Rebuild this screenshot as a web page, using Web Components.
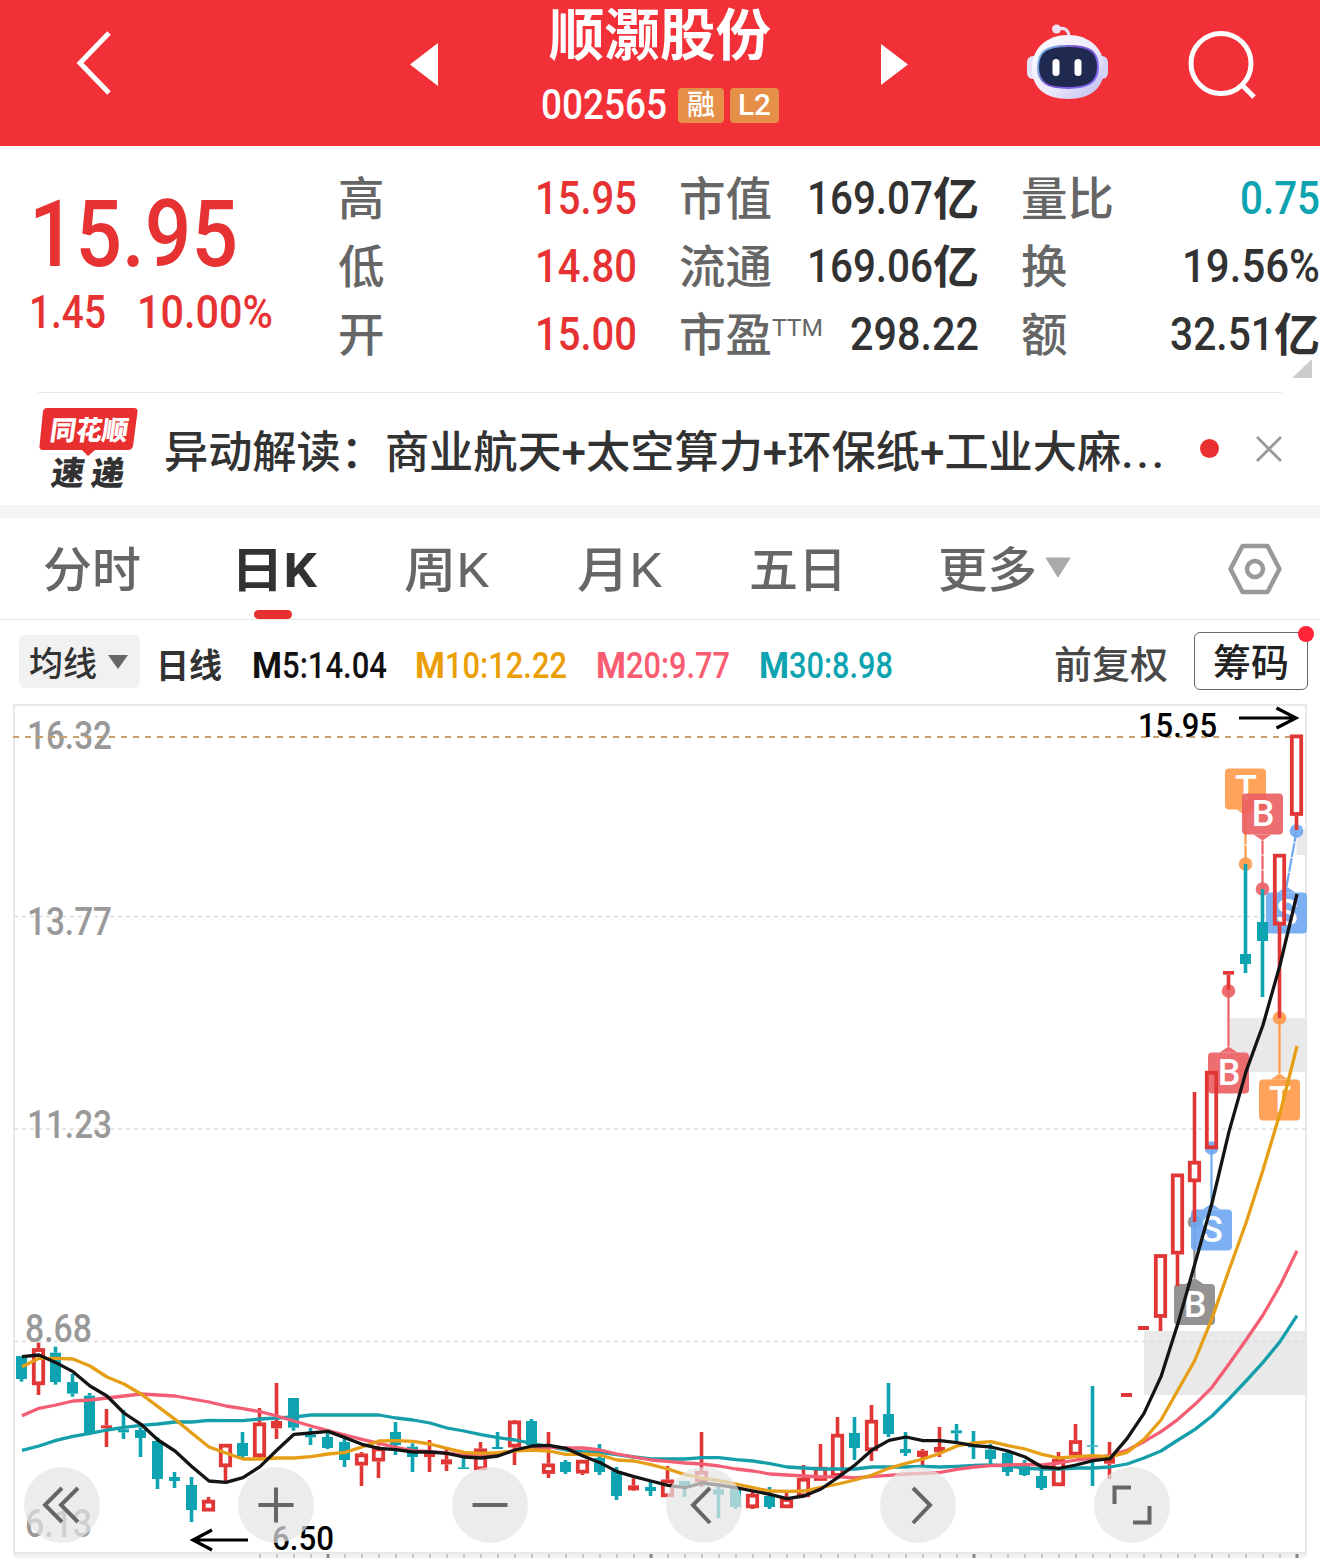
<!DOCTYPE html>
<html lang="zh-CN">
<head>
<meta charset="utf-8">
<title>顺灏股份 002565</title>
<style>
  body {
    margin: 0;
    width: 1320px;
    height: 1558px;
    overflow: hidden;
    background: #fff;
    color: #323232;
    font-family: Roboto, "Noto Sans CJK SC", sans-serif;
    --red: #e63232;
    --teal: #0ea3b1;
    --muted: #666;
  }
</style>
</head>
<body>
<stock-header>
  <fit-text slot="name" w="222" size="55.5" lh="60" style="font-weight:700">顺灏股份</fit-text>
  <fit-text slot="code" w="126" size="42" lh="42">002565</fit-text>
</stock-header>
<quote-panel></quote-panel>
<news-strip>
  <fit-text w="1003" size="44" lh="68">异动解读：商业航天+太空算力+环保纸+工业大麻<span style="letter-spacing:3px">...</span></fit-text>
</news-strip>
<period-tabs></period-tabs>
<average-bar></average-bar>
<k-chart></k-chart>

<script>
const define = (name, html, setup) => {
  const template = document.createElement('template')
  template.innerHTML = html
  customElements.define(name, class extends HTMLElement {
    constructor() {
      super()
      this._root = this.attachShadow({ mode: 'open' })
      this._root.appendChild(template.content.cloneNode(true))
      if (setup) setup(this._root, this)
    }
  })
}

define('stock-header', `
  <style>
    :host {
      display: grid;
      grid-template-columns: 410px 30px 440px 30px 114px 90px 1fr;
      height: 146px;
      background: #f23038;
      color: #fff;
    }
    svg { display: block; }
    .back { margin: 28px 0 0 71px; }
    .prev, .next { margin-top: 42px; }
    .title { display: flex; flex-direction: column; align-items: center; padding-top: 7px; }
    .line { display: flex; align-items: center; margin-top: 17px; font-weight: 500; }
    .badge {
      display: flex; align-items: center; justify-content: center;
      box-sizing: border-box; height: 35px; border-radius: 4px;
      background: #e58f49; font-size: 28px;
    }
    .rong { width: 46px; margin-left: 11px; }
    .l2 { width: 49px; margin-left: 6px; }
    .robot { margin-top: 20px; }
    .search { margin: 28px 0 0 70px; }
  </style>
  <svg class="back" width="44" height="70"><path d="M38 5L9 35L38 65" fill="none" stroke="#fff" stroke-width="5"/></svg>
  <svg class="prev" width="30" height="46"><path d="M0 22.500L28 1V44Z" fill="#fff"/></svg>
  <div class="title">
    <slot name="name"></slot>
    <div class="line">
      <slot name="code"></slot>
      <span class="badge rong"><fit-text w="28" size="28" lh="37">融</fit-text></span>
      <span class="badge l2"><fit-text w="33" size="30" lh="34">L2</fit-text></span>
    </div>
  </div>
  <svg class="next" width="30" height="46"><path d="M1 2L28 22.500L1 43Z" fill="#fff"/></svg>
  <span></span>
  <svg class="robot" width="90" height="84" viewBox="1024 20 90 84">
    <defs>
      <linearGradient id="shell" x1="0" y1="0" x2="1" y2="1">
        <stop offset="0" stop-color="#fff"/><stop offset=".6" stop-color="#e9e7fb"/><stop offset="1" stop-color="#b9b6ee"/>
      </linearGradient>
      <linearGradient id="rim" x1="0" y1="0" x2="1" y2=".5">
        <stop offset="0" stop-color="#7bdcea"/><stop offset=".5" stop-color="#7a4fd0"/><stop offset="1" stop-color="#8468f5"/>
      </linearGradient>
    </defs>
    <path d="M1056 30C1064 26 1069 30 1069 37" fill="none" stroke="#e8def2" stroke-width="3"/>
    <circle cx="1056.500" cy="29" r="4.500" fill="#efe2f2"/>
    <rect x="1027" y="56" width="14" height="23" rx="6" fill="#e4e2f8"/>
    <rect x="1094" y="56" width="14" height="23" rx="6" fill="#d6d3f6"/>
    <path d="M1068 35C1089 35 1104 48 1104 68C1104 88 1091 99 1068 99C1045 99 1032 88 1032 68C1032 48 1047 35 1068 35Z" fill="url(#shell)"/>
    <path d="M1068 46C1088 46 1098 50 1098 67C1098 83 1088 88 1068 88C1048 88 1038 83 1038 67C1038 50 1048 46 1068 46Z" fill="#202a50" stroke="url(#rim)" stroke-width="2"/>
    <rect x="1052.500" y="59" width="7" height="17" rx="3.500" fill="#fff"/>
    <rect x="1074.500" y="59" width="7" height="17" rx="3.500" fill="#fff"/>
  </svg>
  <svg class="search" width="76" height="76" viewBox="1184 28 76 76">
    <circle cx="1221" cy="63.500" r="30" fill="none" stroke="#fff" stroke-width="5"/>
    <path d="M1242 85L1254 97" stroke="#fff" stroke-width="5"/>
  </svg>
`)

define('quote-panel', `
  <style>
    :host { display: grid; grid-template-columns: 339px 1fr; height: 246px; font-weight: 500; }
    .price { color: var(--red); padding: 39px 0 0 29px; }
    .change { display: flex; gap: 31px; margin-top: -4px; }
    .grid {
      display: grid; grid-template-columns: 298px 299px 298px; column-gap: 43px;
      grid-auto-rows: 68px; padding-top: 18px; position: relative;
    }
    .more { position: absolute; right: 8px; top: 213px; }
  </style>
  <div class="price">
    <fit-text w="209" size="93" lh="100">15.95</fit-text>
    <div class="change">
      <fit-text w="77" size="46" lh="62">1.45</fit-text>
      <fit-text w="136" size="46" lh="62">10.00%</fit-text>
    </div>
  </div>
  <div class="grid">
    <quote-cell label="高" value="15.95" w="102" tone="up"></quote-cell>
    <quote-cell label="市值" value="169.07" w="126" unit="亿"></quote-cell>
    <quote-cell label="量比" value="0.75" w="80" tone="down"></quote-cell>
    <quote-cell label="低" value="14.80" w="102" tone="up"></quote-cell>
    <quote-cell label="流通" value="169.06" w="126" unit="亿"></quote-cell>
    <quote-cell label="换" value="19.56%" w="138"></quote-cell>
    <quote-cell label="开" value="15.00" w="102" tone="up"></quote-cell>
    <quote-cell label="市盈" sup="TTM" value="298.22" w="129"></quote-cell>
    <quote-cell label="额" value="32.51" w="104" unit="亿"></quote-cell>
    <svg class="more" width="20" height="20"><path d="M20 0V19H0Z" fill="#ccc"/></svg>
  </div>
`)

define('quote-cell', `
  <style>
    :host { display: flex; justify-content: space-between; height: 68px; line-height: 68px; font-size: 46px; font-weight: 500; }
    :host([tone="up"]) .value { color: var(--red); }
    :host([tone="down"]) .value { color: var(--teal); }
    .label { display: flex; color: var(--muted); margin-left: -1px; }
    .value { display: flex; }
  </style>
  <span class="label"></span>
  <span class="value"></span>
`, (root, el) => {
  const get = name => el.getAttribute(name)
  root.querySelector('.label').innerHTML =
    `<fit-text w="${get('label').length * 46.5}" size="46" lh="71">${get('label')}</fit-text>` +
    (get('sup') ? `<fit-text w="51" size="24" lh="56" style="font-weight:400">${get('sup')}</fit-text>` : '')
  root.querySelector('.value').innerHTML =
    `<fit-text w="${get('w')}" size="46" lh="68">${get('value')}</fit-text>` +
    (get('unit') ? `<fit-text w="46" size="46" lh="71" style="font-weight:700">${get('unit')}</fit-text>` : '')
})

define('news-strip', `
  <style>
    :host {
      display: flex; align-items: flex-start; box-sizing: border-box; height: 126px;
      padding-left: 38px; border-bottom: 13px solid #f4f4f4; position: relative; font-weight: 500;
    }
    :host::before { content: ""; position: absolute; left: 38px; right: 38px; top: 0; border-top: 1px solid #eaeaea; }
    .logo { margin-top: 14px; overflow: visible; }
    .text { margin: 27px 0 0 25px; }
    .dot { width: 19px; height: 19px; border-radius: 50%; background: #e83030; margin: 47px 0 0 33px; }
    .close { margin: 43px 0 0 36px; }
  </style>
  <svg class="logo" width="101" height="90" viewBox="38 406 101 90">
    <path d="M47 408H134Q138 408 137.500 412L133 446Q132 450 128 450H95L88 456L82 450H43Q39 450 39.500 446L43 411Q44 408 47 408Z" fill="#e83030"/>
    <g font-family="Noto Sans CJK SC" font-weight="900">
      <text transform="translate(49 440) skewX(-8)" font-size="27" textLength="78" lengthAdjust="spacingAndGlyphs" fill="#fff">同花顺</text>
      <text transform="translate(50 485) skewX(-8)" font-size="33" textLength="73" fill="#323232">速递</text>
    </g>
  </svg>
  <div class="text"><slot></slot></div>
  <span class="dot"></span>
  <svg class="close" width="28" height="28"><path d="M2 2L26 26M26 2L2 26" stroke="#999" stroke-width="2.800"/></svg>
`)

define('period-tabs', `
  <style>
    :host {
      display: flex; box-sizing: border-box; height: 102px; padding-left: 43px;
      border-bottom: 1.500px solid #e6e6e6; color: var(--muted); font-weight: 500; position: relative;
    }
    .tab { margin-top: 16px; margin-right: var(--gap); }
    .tab i { font-style: normal; font-weight: 400; }
    .on { color: #323232; font-weight: 700; position: relative; }
    .on::after {
      content: ""; position: absolute; left: 23px; top: 76px;
      width: 38px; height: 9px; border-radius: 5px; background: #e83030;
    }
    .arrow { margin-top: 39px; }
    .gear { margin: 22px 0 0 155px; }
  </style>
  <div class="tab" style="--gap:90px"><fit-text w="98" size="48" lh="74">分时</fit-text></div>
  <div class="tab on" style="--gap:87px"><fit-text w="86" size="48" lh="74">日K</fit-text></div>
  <div class="tab" style="--gap:88px"><fit-text w="85" size="48" lh="74">周<i>K</i></fit-text></div>
  <div class="tab" style="--gap:87px"><fit-text w="85" size="48" lh="74">月<i>K</i></fit-text></div>
  <div class="tab" style="--gap:91px"><fit-text w="98" size="48" lh="74">五日</fit-text></div>
  <div class="tab" style="--gap:8px"><fit-text w="99" size="48" lh="74">更多</fit-text></div>
  <svg class="arrow" width="26" height="22"><path d="M1 1H25L13 20Z" fill="#aaa" stroke="#aaa" stroke-linejoin="round"/></svg>
  <svg class="gear" width="58" height="58" viewBox="1226 540 58 58" fill="none" stroke="#999">
    <path d="M1242.500 546H1267.500L1279.500 569L1267.500 592H1242.500L1230.500 569Z" stroke-width="4.500" stroke-linejoin="round"/>
    <circle cx="1255" cy="569" r="8" stroke-width="4.500"/>
  </svg>
`)

define('average-bar', `
  <style>
    :host { display: flex; height: 80px; align-items: flex-start; font-weight: 500; }
    .pick {
      display: flex; align-items: center; box-sizing: border-box; width: 121px; height: 53px;
      margin: 15px 16px 0 19px; padding-left: 10px; gap: 10px; border-radius: 6px; background: #f1f1f1;
    }
    .ma { display: flex; margin-top: 20px; }
    .ma b { font-weight: 700; }
    .adj { margin: 14px 0 0 161px; color: #484848; }
    .chips {
      box-sizing: border-box; width: 114px; height: 58px; margin: 12px 0 0 26px; padding: 0 0 0 18px;
      border: 1.500px solid #666; border-radius: 6px; position: relative; color: #222;
    }
    .chips::after {
      content: ""; position: absolute; right: -7px; top: -7px;
      width: 16px; height: 16px; border-radius: 50%; background: #ff2436;
    }
  </style>
  <div class="pick">
    <fit-text w="68" size="34" lh="53" style="padding-top:5px">均线</fit-text>
    <svg width="22" height="16"><path d="M1 1H21L11 15Z" fill="#666"/></svg>
  </div>
  <fit-text w="66" size="34" lh="54" style="margin-top:19px;font-weight:700">日线</fit-text>
  <div class="ma" style="margin-left:30px;color:#111"><fit-text w="30" size="36" lh="52"><b>M</b></fit-text><fit-text w="105" size="36" lh="52">5:14.04</fit-text></div>
  <div class="ma" style="margin-left:28px;color:#eb9e05"><fit-text w="30" size="36" lh="52"><b>M</b></fit-text><fit-text w="122" size="36" lh="52">10:12.22</fit-text></div>
  <div class="ma" style="margin-left:29px;color:#f95b71"><fit-text w="30" size="36" lh="52"><b>M</b></fit-text><fit-text w="104" size="36" lh="52">20:9.77</fit-text></div>
  <div class="ma" style="margin-left:29px;color:var(--teal)"><fit-text w="30" size="36" lh="52"><b>M</b></fit-text><fit-text w="104" size="36" lh="52">30:8.98</fit-text></div>
  <div class="adj"><fit-text w="114" size="38" lh="62">前复权</fit-text></div>
  <div class="chips"><fit-text w="76" size="38" lh="61">筹码</fit-text></div>
`)

define('round-button', `
  <style>
    :host {
      display: flex; align-items: center; justify-content: center;
      width: 76px; height: 76px; border-radius: 50%; background: rgba(228, 228, 228, .71);
    }
    path { fill: none; stroke: #666; stroke-width: 4; }
  </style>
  <svg width="76" height="76"><path/></svg>
`, (root, el) => root.querySelector('path').setAttribute('d', el.getAttribute('d')))

// Candles and averages are kept in ticks: 3 ticks to a pixel, counted down from BASE.
const BASE = 1360
const FIRST_X = 21.5
const STEP = 17
const xAt = i => FIRST_X + STEP * i
const yAt = tick => BASE + tick / 3

// colour, high, body top, body bottom, low
const CANDLES = `
g -12 -12 57 65|r -52 -35 75 105|g -40 -22 66 74|g 42 66 101 110|g 99 107 220 222
r 147 196 205 261|g 150 208 217 237|g 202 210 234 291|g 232 243 357 387|g 336 351 363 384
g 351 375 450 486|r 411 420 454 454|r 252 252 321 365|g 216 249 288 294|r 144 188 291 294
r 69 183 205 237|g 114 114 203 212|g 204 224 232 255|g 218 231 264 267|g 237 246 300 321
r 276 281 316 378|r 257 263 304 354|g 186 216 255 285|g 250 260 291 336|r 240 273 291 336
r 262 298 313 333|g 290 322 327 327|r 246 266 330 330|g 216 261 267 267|r 180 182 262 315
g 177 183 255 273|r 216 311 341 354|g 300 306 336 342|r 300 300 340 345|g 252 294 336 345
g 321 333 408 420|r 355 376 391 393|g 366 381 393 408|r 318 359 411 411|g 363 363 375 411
r 216 333 366 381|g 378 388 404 474|g 378 384 441 447|r 396 402 444 447|g 381 408 441 447
r 398 415 444 444|r 315 354 411 411|r 252 321 362 362|r 171 222 350 350|g 171 219 264 300
r 135 180 273 303|g 69 162 222 231|g 216 267 279 288|r 267 272 291 316|r 201 261 277 291
g 192 211 220 243|g 213 252 262 297|g 252 269 297 315|g 270 279 336 348|g 300 318 345 348
g 327 348 384 390|r 276 297 378 378|r 192 241 286 286|g 78 256 260 378|r 246 288 311 357
r 99 99 111 111|r -102 -102 -90 -90|r -317 -317 -127 -87|r -559 -559 -317 -222|r -804 -597 -534 -414
r -867 -867 -633 -633|r -1167 -1167 -1156 -1110|g -1488 -1218 -1188 -1161|g -1413 -1314 -1257 -1089|r -1518 -1518 -1304 -1026
r -1876 -1876 -1633 -1590`.trim().split(/[|\n]/).map(row => row.split(' '))

const AVERAGES = {
  '#159fab': [271, 258, 241, 229, 220, 210, 202, 196, 192, 186, 186, 181, 182, 182, 177, 174, 171, 165, 165,
    165, 165, 165, 174, 180, 189, 204, 213, 224, 233, 240, 250, 260, 270, 275, 277, 284, 291, 297, 297,
    297, 293, 293, 299, 303, 311, 321, 324, 327, 327, 327, 321, 321, 321, 319, 321, 319, 316, 315,
    318, 325, 327, 327, 324, 324, 321, 312, 294, 273, 240, 208, 168, 117, 63, 7, -55, -133],
  '#f45e74': [167, 145, 135, 123, 120, 114, 108, 102, 105, 108, 117, 126, 138, 146, 155, 168, 183, 198, 212,
    225, 238, 250, 262, 272, 275, 279, 286, 288, 283, 271, 264, 261, 264, 264, 270, 282, 291, 300, 304,
    309, 312, 318, 327, 333, 342, 345, 348, 351, 350, 354, 349, 346, 342, 340, 337, 328, 321, 317,
    315, 313, 315, 309, 300, 294, 286, 271, 245, 215, 178, 133, 82, 12, -60, -135, -223, -328],
  '#e59e16': [20, -5, -5, -3, 18, 51, 72, 102, 140, 178, 220, 261, 279, 297, 297, 294, 294, 290, 282,
    277, 261, 243, 242, 244, 252, 265, 277, 280, 278, 273, 270, 273, 283, 282, 285, 300, 303, 314, 327,
    344, 354, 362, 372, 383, 393, 394, 393, 382, 372, 360, 345, 325, 310, 297, 280, 258, 249, 245,
    257, 267, 283, 294, 290, 287, 291, 277, 238, 180, 90, 0, -125, -270, -411, -570, -740, -942],
  '#141414': [-10, -15, 8, 35, 78, 108, 159, 193, 240, 273, 320, 363, 367, 353, 320, 270, 223, 219, 214,
    233, 253, 265, 269, 276, 276, 280, 291, 294, 288, 270, 258, 256, 265, 288, 308, 335, 350, 363, 376,
    383, 369, 375, 383, 393, 403, 416, 408, 387, 352, 315, 270, 241, 231, 242, 242, 248, 257, 261,
    273, 291, 321, 325, 315, 302, 296, 236, 160, 50, -110, -290, -471, -685, -865, -1005, -1185, -1398]
}

// letter, colour, flag box left/top, dot x/y, side the pointer is on
const FLAGS = [
  ['B', '#888', 1174, 1284, 1194.5, 1222, 'up'],
  ['S', '#6ea8f1', 1191, 1209.5, 1211.5, 1148, 'up'],
  ['B', '#ec5f62', 1208, 1052.5, 1228.5, 991, 'up'],
  ['T', '#ff9a49', 1259, 1079.5, 1279.5, 1018, 'up'],
  ['T', '#ff9a49', 1225, 768.5, 1245.5, 864, 'down'],
  ['B', '#ec5f62', 1242, 793.5, 1262.5, 889, 'down'],
  ['S', '#6ea8f1', 1266, 892.5, 1296.5, 831, 'up']
]

const drawCandle = ([kind, ...ticks], i) => {
  const [high, top, bottom, low] = ticks.map(t => yAt(Number(t)))
  const color = kind === 'r' ? '#e13636' : '#0ea3b1'
  const x = xAt(i)
  const wick = (a, b) => b - a > 0.5 ? `<path d="M${x} ${a}V${b}" stroke="${color}" stroke-width="3.6"/>` : ''
  const body = kind === 'r' && bottom - top > 9
    ? `<rect x="${x - 4.7}" y="${top + 1.7}" width="9.4" height="${bottom - top - 3.4}" fill="none" stroke="${color}" stroke-width="3.8"/>`
    : `<rect x="${x - 5.5}" y="${top}" width="11" height="${bottom - top}" fill="${color}"/>`
  return wick(high, top) + body + wick(bottom, low)
}

const drawFlag = ([letter, color, left, top, dx, dy, side]) => {
  const mid = left + 20.5
  const edge = side === 'up' ? top : top + 41
  const tip = side === 'up' ? top - 6 : top + 47
  return `<path d="M${mid} ${tip}L${dx} ${dy}" stroke="${color}" stroke-width="2.200" ${side === 'down' || dx !== mid ? 'stroke-dasharray="14 1"' : ''}/>
    <g opacity=".9"><circle cx="${dx}" cy="${dy}" r="6.800" fill="${color}"/>
    <rect x="${left}" y="${top}" width="41" height="41" rx="4" fill="${color}"/>
    <path d="M${mid - 9} ${edge}L${mid} ${tip}L${mid + 9} ${edge}Z" fill="${color}"/></g>
    <text x="${mid + 0.5}" y="${top + 32.5}" font-size="36" font-weight="500" fill="#fff" text-anchor="middle">${letter}</text>`
}

const drawLine = ([color, ticks]) =>
  `<polyline points="${ticks.map((t, i) => `${xAt(i) + 0.5},${yAt(t)}`).join(' ')}" fill="none" stroke="${color}" stroke-width="3.3" stroke-linejoin="round"/>`

const label = (text, x, y, width, size, color) =>
  `<text x="${x}" y="${y}" font-size="${size}" font-weight="500" textLength="${width}" lengthAdjust="spacingAndGlyphs" fill="${color}">${text}</text>`

const drawTicks = () => {
  let out = ''
  for (let i = 14; i < 76; i++) {
    const major = i % 19 === 18
    out += `<path d="M${xAt(i) + 0.5} 1554V1558" stroke="${major ? '#888' : '#c8c8c8'}" stroke-width="${major ? 3 : 2}"/>`
  }
  return out
}

define('k-chart', `
  <style>
    :host { display: block; height: 858px; position: relative; }
    svg { display: block; }
    .tools { position: absolute; left: 24px; right: 150px; top: 767px; display: flex; justify-content: space-between; }
  </style>
  <svg width="1320" height="858" viewBox="0 700 1320 858" font-family="Roboto"></svg>
  <div class="tools">
    <round-button d="M38 21L21 38L38 55M54 21L37 38L54 55"></round-button>
    <round-button d="M38 20.500V55.500M20.500 38H55.500"></round-button>
    <round-button d="M20.500 38H55.500"></round-button>
    <round-button d="M44 21L27 38L44 56"></round-button>
    <round-button d="M33 21L50 38L33 56"></round-button>
    <round-button d="M20.500 37V20.500H37M55.500 39V55.500H39"></round-button>
  </div>
`, root => {
  root.querySelector('svg').innerHTML = `
    <g fill="#e9e9e9">
      <rect x="1144" y="1331" width="163" height="64"/>
      <rect x="1230" y="1018" width="77" height="54"/>
      <rect x="1296.500" y="830" width="10.500" height="25"/>
    </g>
    <path d="M14 1556H1307" stroke="#f2f2f2" stroke-width="4"/>
    <path d="M14 1553V705H1306V1553Z" fill="none" stroke="#e8e8e8" stroke-width="2"/>
    <path d="M14 916.500H1306M14 1129H1306M14 1341.500H1306" stroke="#dcdcdc" stroke-width="1.300" stroke-dasharray="4 4"/>
    ${label('16.32', 27, 749, 85, 38, '#999')}
    ${label('13.77', 27, 935, 85, 38, '#999')}
    ${label('11.23', 27, 1138, 85, 38, '#999')}
    ${label('8.68', 25, 1342, 67, 38, '#999')}
    ${label('6.13', 25, 1537, 67, 38, '#999')}
    <path d="M13 737H1296" stroke="#c9a06c" stroke-width="2" stroke-dasharray="6 6"/>
    ${FLAGS.map(drawFlag).join('')}
    ${CANDLES.map(drawCandle).join('')}
    ${Object.entries(AVERAGES).map(drawLine).join('')}
    ${drawTicks()}
    ${label('15.95', 1138, 736.5, 79, 33, '#000')}
    ${label('6.50', 272, 1550, 62, 33, '#000')}
    <path d="M1239 718H1296M1276.500 708L1296 718L1276.500 728M248 1540H193M212 1530L193 1540L212 1550" fill="none" stroke="#000" stroke-width="3.200"/>`
})

/** Text squeezed or stretched horizontally to a given width. */
class FitText extends HTMLElement {
  constructor() {
    super()
    this._root = this.attachShadow({ mode: 'open' })
    this._root.innerHTML = `
      <style>
        :host { display: block; flex: none; white-space: nowrap; }
        span { display: inline-block; transform-origin: 0 50%; vertical-align: top; }
      </style>
      <span><slot></slot></span>`
  }

  connectedCallback() {
    const span = this._root.querySelector('span')
    const width = Number(this.getAttribute('w'))
    this.style.width = width + 'px'
    this.style.height = this.style.lineHeight = this.getAttribute('lh') + 'px'
    this.style.fontSize = this.getAttribute('size') + 'px'
    span.style.transform = `scaleX(${width / span.getBoundingClientRect().width})`
  }
}
customElements.define('fit-text', FitText)
</script>
</body>
</html>
